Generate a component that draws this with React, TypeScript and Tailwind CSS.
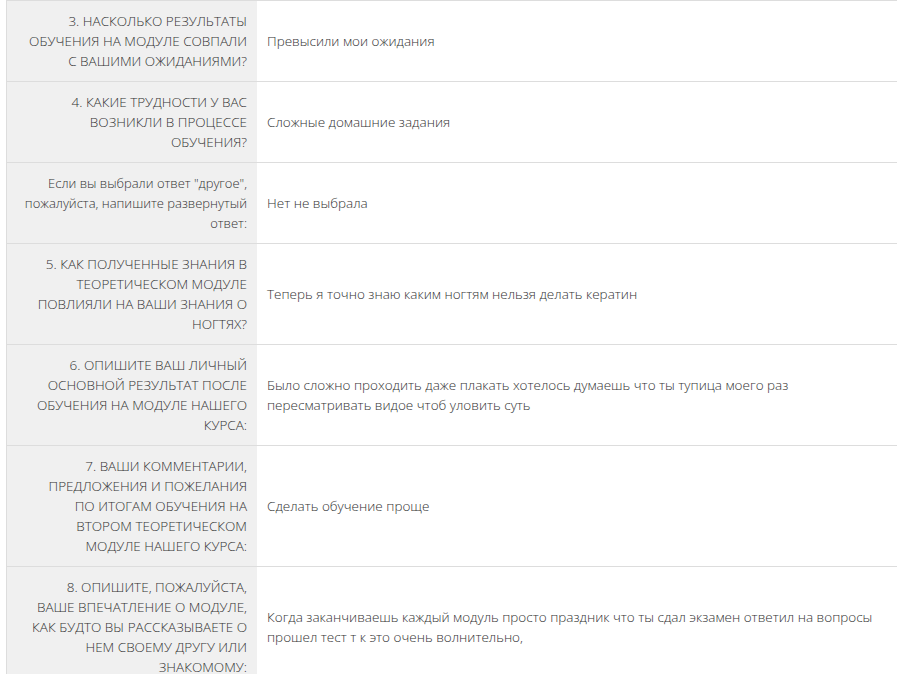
const rows: { q: string[]; a: string; upper: boolean }[] = [
  { q: ['3. Насколько результаты', 'обучения на модуле совпали', 'с вашими ожиданиями?'], a: 'Превысили мои ожидания', upper: true },
  { q: ['4. Какие трудности у вас', 'возникли в процессе', 'обучения?'], a: 'Сложные домашние задания', upper: true },
  { q: ['Если вы выбрали ответ "другое",', 'пожалуйста, напишите развернутый', 'ответ:'], a: 'Нет не выбрала', upper: false },
  { q: ['5. Как полученные знания в', 'теоретическом модуле', 'повлияли на ваши знания о', 'ногтях?'], a: 'Теперь я точно знаю каким ногтям нельзя делать кератин', upper: true },
  { q: ['6. Опишите ваш личный', 'основной результат после', 'обучения на модуле нашего', 'курса:'], a: 'Было сложно проходить даже плакать хотелось думаешь что ты тупица моего раз пересматривать видое чтоб уловить суть', upper: true },
  { q: ['7. Ваши комментарии,', 'предложения и пожелания', 'по итогам обучения на', 'втором теоретическом', 'модуле нашего курса:'], a: 'Сделать обучение проще', upper: true },
  { q: ['8. Опишите, пожалуйста,', 'ваше впечатление о модуле,', 'как будто вы рассказываете о', 'нем своему другу или', 'знакомому:'], a: 'Когда заканчиваешь каждый модуль просто праздник что ты сдал экзамен ответил на вопросы прошел тест т к это очень волнительно,', upper: true },
];

export default function App() {
  return (
    <div className="min-h-screen bg-white pl-[6px] font-['Open_Sans',sans-serif] text-[13px] leading-[20px] font-light">
      <div className="border-l border-t border-[#dddddd]">
        {rows.map((r, i) => (
          <div key={i} className="flex border-b border-[#dddddd]">
            <div
              className={`w-[250px] shrink-0 bg-[#f0f0f0] px-[10px] py-[10px] text-right text-[#333333] ${r.upper ? 'uppercase text-[13.5px]' : ''}`}
            >
              {r.q.map((line, j) => (
                <div key={j} className="whitespace-nowrap">{line}</div>
              ))}
            </div>
            <div className="flex flex-1 items-center px-[10px] py-[10px] text-[13.5px] text-[#333333]">
              <span className="max-w-[615px]">{r.a}</span>
            </div>
          </div>
        ))}
      </div>
    </div>
  );
}
